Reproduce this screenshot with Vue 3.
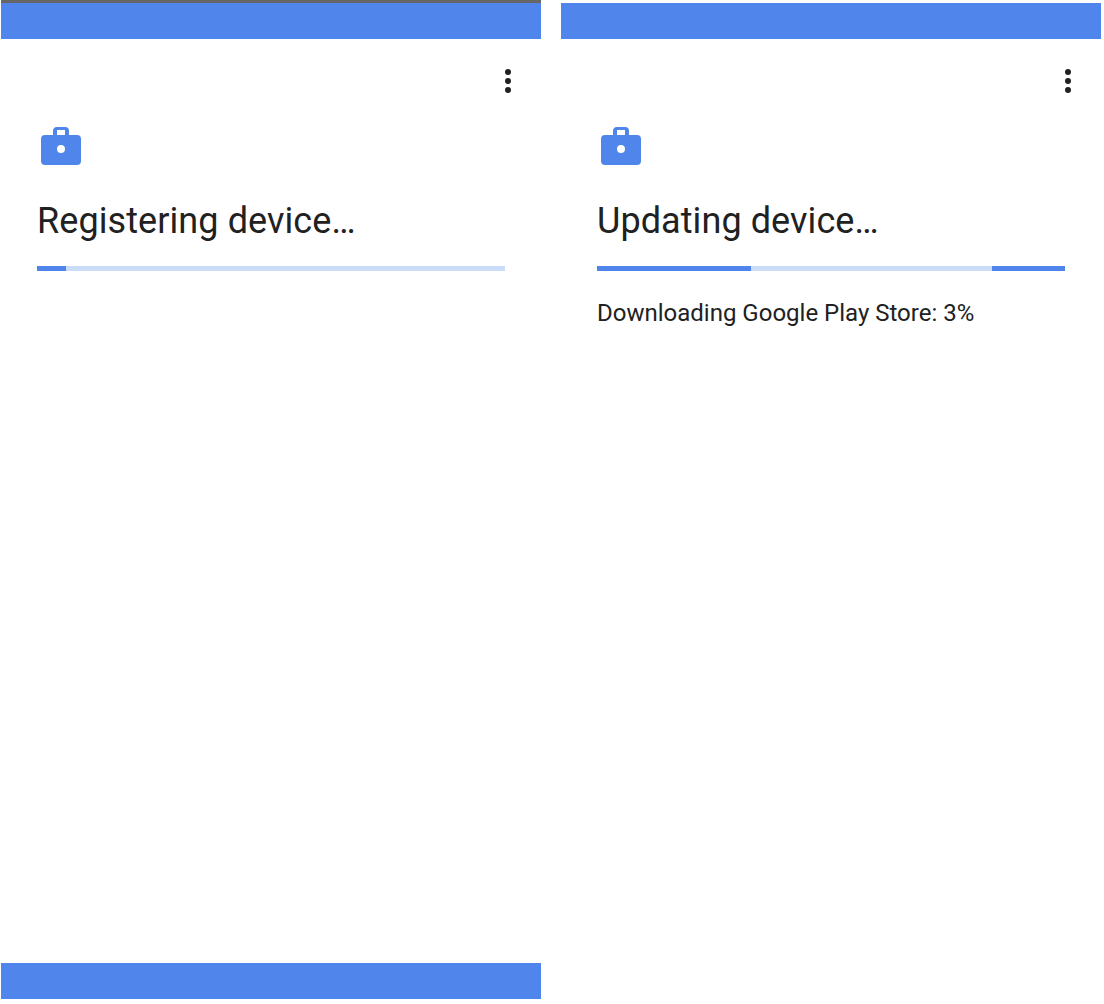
<template>
  <div class="screens">
    <section v-for="s in screens" :key="s.title" class="phone">
      <div class="status" :class="{ dark: s.statusBar }"></div>
      <div class="appbar"></div>
      <div class="content">
        <div class="menu-row">
          <svg class="menu" width="6" height="24" viewBox="0 0 6 24">
            <circle cx="3" cy="3" r="3" />
            <circle cx="3" cy="12" r="3" />
            <circle cx="3" cy="21" r="3" />
          </svg>
        </div>
        <svg class="case" width="40" height="38" viewBox="0 0 40 38">
          <path
            fill-rule="evenodd"
            d="M12 8V4a4 4 0 0 1 4-4h8a4 4 0 0 1 4 4v4h8a4 4 0 0 1 4 4v22a4 4 0 0 1-4 4H4a4 4 0 0 1-4-4V12a4 4 0 0 1 4-4zM16 3V8h8V3zM20 18a4 4 0 1 0 0 8 4 4 0 0 0 0-8z"
          />
        </svg>
        <h1 class="title">{{ s.title }}</h1>
        <div class="track">
          <div
            v-for="seg in s.segments"
            :key="seg.left"
            class="fill"
            :style="{ left: seg.left + 'px', width: seg.width + 'px' }"
          ></div>
        </div>
        <p v-if="s.detail" class="detail">{{ s.detail }}</p>
      </div>
      <div v-if="s.footer" class="footer"></div>
    </section>
  </div>
</template>

<script setup>
const screens = [
  {
    title: 'Registering device…',
    statusBar: true,
    footer: true,
    segments: [{ left: 0, width: 29 }]
  },
  {
    title: 'Updating device…',
    detail: 'Downloading Google Play Store: 3%',
    segments: [
      { left: 0, width: 154 },
      { left: 395, width: 73 }
    ]
  }
]
</script>

<style scoped>
.screens {
  display: flex;
  gap: 20px;
  padding-left: 1px;
  width: 1103px;
  box-sizing: border-box;
  font-family: Roboto, "Liberation Sans", sans-serif;
}
.phone {
  width: 540px;
  height: 999px;
  display: flex;
  flex-direction: column;
}
.status { height: 3px; }
.status.dark { background: #666666; }
.appbar {
  height: 36px;
  background: #5086ec;
}
.content {
  flex: 1;
  padding: 30px 36px 0;
}
.menu-row {
  display: flex;
  justify-content: flex-end;
  height: 24px;
}
.menu {
  fill: #212121;
  margin-right: -6px;
}
.case {
  display: block;
  fill: #5086ec;
  margin: 34px 0 0 4px;
}
.title {
  margin: 32px 0 0;
  font-size: 36px;
  font-weight: 400;
  letter-spacing: 0.08px;
  line-height: 48px;
  color: #212121;
}
.track {
  position: relative;
  height: 5px;
  margin-top: 21px;
  background: #cbdcf9;
}
.fill {
  position: absolute;
  top: 0;
  bottom: 0;
  background: #5086ec;
}
.detail {
  margin: 27px 0 0;
  font-size: 24px;
  line-height: 30px;
  color: #212121;
}
.footer {
  height: 36px;
  background: #5086ec;
}
</style>
